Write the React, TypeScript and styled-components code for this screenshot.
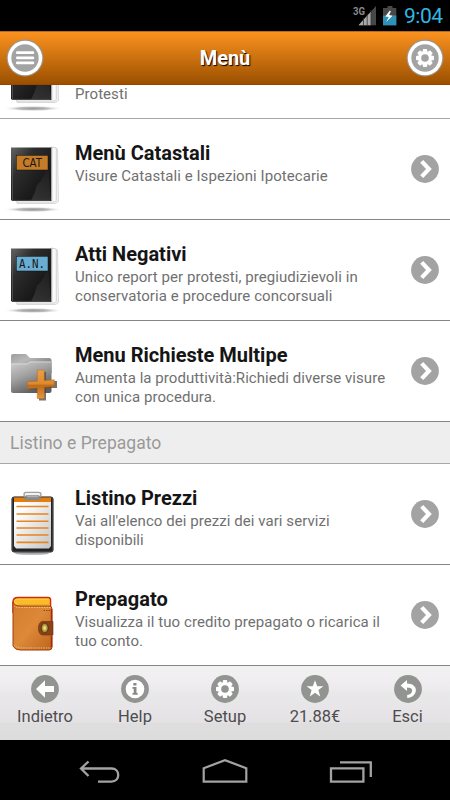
import React from 'react';
import styled, {createGlobalStyle} from "styled-components";

export default function App() {
    return (
        <Screen>
            <GlobalStyle/>
            <StatusBar>
                <StatusIcons/>
                <Clock>9:04</Clock>
            </StatusBar>
            <Header>
                <MenuIcon/>
                <HeaderTitle>Menù</HeaderTitle>
                <SettingsIcon/>
            </Header>
            <List>
                <ClippedRow>
                    <svg width="66" height="33" viewBox="0 67 66 33"><Book id="protesti"/></svg>
                    <Description>Protesti</Description>
                </ClippedRow>
                <MenuItem icon={<Book id="cat" label="CAT" color="#c57c28"/>} title="Menù Catastali"
                          lines={['Visure Catastali e Ispezioni Ipotecarie']}/>
                <MenuItem icon={<Book id="an" label="A.N." color="#6aadd3"/>} title="Atti Negativi"
                          lines={['Unico report per protesti, pregiudizievoli in', 'conservatoria e procedure concorsuali']}/>
                <MenuItem icon={<Folder/>} title="Menu Richieste Multipe"
                          lines={['Aumenta la produttività:Richiedi diverse visure', 'con unica procedura.']}/>
                <Section>Listino e Prepagato</Section>
                <MenuItem icon={<Clipboard/>} title="Listino Prezzi"
                          lines={["Vai all'elenco dei prezzi dei vari servizi", 'disponibili']}/>
                <MenuItem icon={<Wallet/>} title="Prepagato" last
                          lines={['Visualizza il tuo credito prepagato o ricarica il', 'tuo conto.']}/>
            </List>
            <Toolbar>
                <Tab>
                    <TabIcon><path d="M5 14 14 5.3V11h9v6h-9v5.7z" fill="#fff"/></TabIcon>
                    <span>Indietro</span>
                </Tab>
                <Tab>
                    <TabIcon>
                        <circle cx="14" cy="14" r="9.3" fill="#fff"/>
                        <path d="M12.3 8h3.2v2.4h-3.2zM11.5 12h4v6h1.2v1.7h-5.2V18h1.2v-4.3h-1.2z" fill="#898a88"/>
                    </TabIcon>
                    <span>Help</span>
                </Tab>
                <Tab>
                    <TabIcon><Gear hole="#929491"/></TabIcon>
                    <span>Setup</span>
                </Tab>
                <Tab>
                    <TabIcon>
                        <path d="m14 5.2 2.2 6h6.2l-5 3.9 1.8 6.3-5.2-3.7-5.2 3.7 1.8-6.3-5-3.9h6.2z" fill="#fff"/>
                    </TabIcon>
                    <span>21.88€</span>
                </Tab>
                <Tab $shift={5}>
                    <TabIcon>
                        <path d="M6.5 10.5 13 5v3.4c5.500 0 8.900 2.900 8.900 6.600 0 4.300-3.600 7.600-8.700 8v-3.100c3.100-.3 5-2.300 5-4.500s-1.900-3-5.200-3v3.600z" fill="#fff"/>
                    </TabIcon>
                    <span>Esci</span>
                </Tab>
            </Toolbar>
            <NavBar>
                <svg width="46" height="28" viewBox="0 0 46 28" fill="none" stroke="#a3a3a3" strokeWidth="2.300">
                    <path d="M12.500 4.500 5 11.500 12.500 19M5 11.500H35.500C44.500 11.500 44.500 24.600 35.500 24.600H22"/>
                </svg>
                <svg width="48" height="28" viewBox="0 0 48 28" fill="none" stroke="#a3a3a3" strokeWidth="2.200">
                    <path d="M2.700 24.700V11.200L24 3.200l21.300 8v13.500z"/>
                </svg>
                <svg width="46" height="28" viewBox="0 0 46 28" fill="none" stroke="#a3a3a3" strokeWidth="2.300">
                    <path d="M3 11.300h32.400v13.300H3zM12 5.400h30.800V20"/>
                </svg>
            </NavBar>
        </Screen>
    );
}

type MenuItemProps = {
    icon: React.ReactNode
    title: string
    lines: string[]
    last?: boolean
}

const MenuItem = ({icon, title, lines, last}: MenuItemProps) => {
    return (
        <Row $last={last}>
            <svg width="66" height="100" viewBox="0 0 66 100">{icon}</svg>
            <RowText>
                <Title>{title}</Title>
                {lines.map(line => <Description key={line}>{line}</Description>)}
            </RowText>
            <svg width="28" height="28" viewBox="0 0 28 28">
                <circle cx="14" cy="14" r="13.900" fill="#a3a3a3"/>
                <path d="m10.700 6.400 7.200 7.600-7.200 7.600" fill="none" stroke="#fff" strokeWidth="4.200"/>
            </svg>
        </Row>
    );
};

const TabIcon = ({children}: { children: React.ReactNode }) => (
    <svg width="28" height="28" viewBox="0 0 28 28">
        <circle cx="14" cy="14" r="13.900" fill="#929491"/>
        {children}
    </svg>
);

const Gear = ({hole}: { hole: string }) => (
    <g>
        {[0, 45, 90, 135].map(angle => (
            <rect key={angle} x="11.800" y="5" width="4.400" height="18" rx="1" fill="#fff"
                  transform={`rotate(${angle} 14 14)`}/>
        ))}
        <circle cx="14" cy="14" r="7" fill="#fff"/>
        <circle cx="14" cy="14" r="3.800" fill={hole}/>
    </g>
);

const MenuIcon = () => (
    <svg width="38" height="38" viewBox="0 0 38 38">
        <circle cx="19" cy="19" r="18.400" fill="#9a9392"/>
        <circle cx="19" cy="19" r="17.300" fill="#fff"/>
        <circle cx="19" cy="19" r="13.700" fill="#a3a3a3"/>
        <path d="M11.300 13.700h15.600M11.300 18.800h15.600M11.300 23.900h15.600" stroke="#fff" strokeWidth="2.800"
              strokeLinecap="round"/>
    </svg>
);

const SettingsIcon = () => (
    <svg width="38" height="38" viewBox="0 0 38 38">
        <circle cx="19" cy="19" r="18.400" fill="#9a9392"/>
        <circle cx="19" cy="19" r="17.300" fill="#fff"/>
        <circle cx="19" cy="19" r="13.700" fill="#a3a3a3"/>
        <g transform="translate(5 5)"><Gear hole="#a3a3a3"/></g>
    </svg>
);

const StatusIcons = () => (
    <svg width="46" height="24" viewBox="0 0 46 24">
        <text x="2" y="11" fontSize="10.500" fontWeight="700" fill="#8b8b8b" textLength="12"
              lengthAdjust="spacingAndGlyphs">3G</text>
        <path d="M7.500 21.200 25 2v19.200z" fill="#484848"/>
        <path d="M7.500 21.200 20 7.600v13.600z" fill="#aaa"/>
        <path d="M12.500 14v8M16.200 10v12M20 6v16" stroke="#333" strokeWidth=".8"/>
        <path d="M36.500 2h5v2h3.800v17.300H32V4h4.500z" fill="#484848"/>
        <path d="M32 11.500h13.300v9.800H32z" fill="#2e91b8"/>
        <path d="m38.800 6.500-4.500 6 3.500.6-2.700 4.900 6.500-6.200-3.500-.9 1.800-3.400z" fill="#fff"/>
    </svg>
);

const Book = ({id, label, color}: { id: string, label?: string, color?: string }) => (
    <g>
        <defs>
            <linearGradient id={`${id}-cover`} x1="0" y1="0" x2="1" y2="1">
                <stop offset="0" stopColor="#666"/>
                <stop offset=".3" stopColor="#2d2d2d"/>
                <stop offset=".65" stopColor="#1b1b1b"/>
                <stop offset="1" stopColor="#101010"/>
            </linearGradient>
            <linearGradient id={`${id}-shine`} x1="0" y1="0" x2="0" y2="1">
                <stop offset="0" stopColor="#fff" stopOpacity="0"/>
                <stop offset="1" stopColor="#fff" stopOpacity=".12"/>
            </linearGradient>
            <radialGradient id={`${id}-shadow`}>
                <stop offset="0" stopColor="#999"/>
                <stop offset=".5" stopColor="#bbb"/>
                <stop offset="1" stopColor="#fff" stopOpacity="0"/>
            </radialGradient>
        </defs>
        <ellipse cx="33" cy="90.500" rx="30" ry="2.800" fill={`url(#${id}-shadow)`}/>
        <path d="M17 84.500h38.500l3-2-1-52.500-6-1.700z" fill="#f3f3f3" stroke="#d0d0d0" strokeWidth=".8"/>
        <path d="M16 83h38.800l1.500-1.500V29l-5-1z" fill="#fafafa" stroke="#c9c9c9" strokeWidth=".8"/>
        <path d="M11 28.500h40.500V82h-39L11 80.500z" fill={`url(#${id}-cover)`}/>
        <path d="M37 66q8-7 11-21l3 36.500H31q4-7 6-15.500z" fill={`url(#${id}-shine)`}/>
        <path d="M12.500 29v52M11.500 81.400h39" stroke="#555" strokeWidth=".8"/>
        <path d="M51.800 28.500v53" stroke="#b5b5b5"/>
        {label && (
            <>
                <rect x="16.300" y="36.300" width="31.700" height="14.700" fill={color} stroke="#111" strokeWidth=".5"/>
                <text x={label === 'CAT' ? 22.5 : 19} y="47.800"
                      fontFamily={label === 'CAT' ? 'DejaVu Sans, sans-serif' : 'DejaVu Sans Mono, monospace'}
                      fontSize="12.500"
                      fill="#171717" textLength={label === 'CAT' ? 19.500 : 26}
                      lengthAdjust="spacingAndGlyphs">{label}</text>
            </>
        )}
    </g>
);

const Folder = () => (
    <g>
        <defs>
            <linearGradient id="folder" x1="0" y1="0" x2="1" y2=".9">
                <stop stopColor="#9d9d9d"/>
                <stop offset=".35" stopColor="#b9b9b9"/>
                <stop offset="1" stopColor="#666"/>
            </linearGradient>
            <linearGradient id="folder-front" x1="0" y1="0" x2=".5" y2="1">
                <stop stopColor="#d0d0d0"/>
                <stop offset=".5" stopColor="#a0a0a0"/>
                <stop offset="1" stopColor="#5d5d5d"/>
            </linearGradient>
            <linearGradient id="plus" x1="0" y1="0" x2="0" y2="1">
                <stop stopColor="#eaa04b"/>
                <stop offset=".48" stopColor="#df8a2c"/>
                <stop offset=".55" stopColor="#bd6b1b"/>
                <stop offset="1" stopColor="#e99738"/>
            </linearGradient>
        </defs>
        <path d="M11 35q0-2 2-2h13l4 4h19q2.500 0 2.500 2.500V52H11z" fill="url(#folder)"/>
        <path d="M11 42.500h15.500l3.500-2h21.500V70q0 2-2 2H13q-2 0-2-2z" fill="url(#folder-front)"/>
        <path d="M11.500 43H27l3-2h21" fill="none" stroke="#ddd" strokeWidth=".8"/>
        <path d="M39 51h7v9h11v7H46v12.500h-7V68.500H28.500v-7H39z" fill="#444" opacity=".75"/>
        <path d="M37.300 49h7v10.500l10-.7v6.800l-10 .6v11.300h-7V67l-9.800.7v-7l9.800-.5z" fill="url(#plus)" stroke="#ba6815" strokeWidth=".5"/>
    </g>
);

const Clipboard = () => (
    <g>
        <defs>
            <linearGradient id="paper" x1="0" y1="0" x2="1" y2="1">
                <stop offset=".2" stopColor="#fff"/>
                <stop offset="1" stopColor="#c4c4c4"/>
            </linearGradient>
        </defs>
        <ellipse cx="32" cy="89.500" rx="17" ry="1.300" fill="#aaa"/>
        <rect x="11.500" y="32.500" width="42" height="56" rx="3" fill="#202426"/>
        <rect x="12.300" y="33.300" width="40.400" height="54.400" rx="2" fill="none" stroke="#555" strokeWidth=".7"/>
        <path d="M14 35h37v47l-2 2.500H16L14 82z" fill="url(#paper)"/>
        <path d="M14 33.500h37v4.500H14z" fill="#e97d0b"/>
        <path d="M16.500 42.500h32M16.500 50h32M16.500 57.300h32M16.500 64h32M16.500 71h32M16.500 78.400h32" stroke="#e9851d" strokeWidth="1.600"/>
        <rect x="24" y="28.300" width="17" height="4.500" rx="2.200" fill="#f2f2f2" stroke="#a0a0a0" strokeWidth="1.300"/>
        <path d="M26 31.300h13l2 5H24z" fill="#898989"/>
        <path d="M27 32.700h11" stroke="#bbb"/>
    </g>
);

const Wallet = () => (
    <g>
        <defs>
            <linearGradient id="wallet" x1="0" y1="0" x2="1" y2="1">
                <stop stopColor="#d57a30"/>
                <stop offset=".5" stopColor="#dc8938"/>
                <stop offset="1" stopColor="#bd641e"/>
            </linearGradient>
            <radialGradient id="clasp">
                <stop stopColor="#fff5ac"/>
                <stop offset=".5" stopColor="#c9ad44"/>
                <stop offset="1" stopColor="#7a6428"/>
            </radialGradient>
        </defs>
        <path d="M13 37q0-4.500 5-4.500h30q3 0 2.500 4V47H13z" fill="#ffca37" stroke="#d02c0b" strokeWidth="1.500"/>
        <path d="M15 36h34M17 38h32M19 39.500h30" stroke="#f1a618" strokeWidth=".8"/>
        <path d="M13 37q1 4 8 4h28q3 0 3 3v38q0 3-3 3H20q-5 0-7-4z" fill="url(#wallet)" stroke="#a23c0a"/>
        <path d="M14 41q2 1.500 6 1.500h31M14 80q3 3 7 3h29" fill="none" stroke="#e9c08a" strokeDasharray="1.500 1"/>
        <path d="M51.500 44v13M51.500 71v11" stroke="#a52c0b" strokeWidth="1.500"/>
        <path d="M43.500 45.500H45m1 0h1.500m1 0H50" stroke="#914610"/>
        <path d="M42 56.500h11V70H42q-3.500-1-3.500-6.700t3.500-6.800z" fill="#8b4216" stroke="#71300b" strokeWidth=".6"/>
        <ellipse cx="44.700" cy="63" rx="3.600" ry="5" fill="url(#clasp)" stroke="#49280d" strokeWidth=".7"/>
    </g>
);

const GlobalStyle = createGlobalStyle`
  * {
    box-sizing: border-box;
  }

  body {
    margin: 0;
    font-family: Roboto, sans-serif;
  }

  svg {
    display: block;
    flex-shrink: 0;
  }
`

const Screen = styled.div`
  display: flex;
  flex-direction: column;
  width: 450px;
  height: 800px;
  overflow: hidden;
  background-color: white;
`

const StatusBar = styled.div`
  display: flex;
  align-items: flex-end;
  justify-content: flex-end;
  gap: 7px;
  height: 31px;
  padding: 0 7px 3px 0;
  background-color: black;
`

const Clock = styled.span`
  width: 39px;
  white-space: nowrap;
  font-size: 21px;
  line-height: 24px;
  letter-spacing: -0.5px;
  color: #33b5e5;
`

const Header = styled.header`
  display: flex;
  align-items: center;
  justify-content: space-between;
  height: 54px;
  padding: 0 6px;
  border-top: 1px solid #b66a1e;
  border-bottom: 1px solid #a14300;
  background: linear-gradient(#fb921f, #9b5000);
`

const HeaderTitle = styled.h1`
  margin: 0;
  font-size: 20px;
  font-weight: 700;
  letter-spacing: -0.1px;
  color: white;
  text-shadow: 1px 1px 1px black;
`

const List = styled.main`
  height: 580px;
`

const Row = styled.div<{ $last?: boolean }>`
  display: flex;
  align-items: center;
  height: ${({$last}) => $last ? '100px' : '101px'};
  padding-right: 11px;
  border-bottom: ${({$last}) => $last ? 'none' : '1px solid #858585'};
`

const ClippedRow = styled.div`
  display: flex;
  height: 34px;
  border-bottom: 1px solid #a6a6a6;

  p {
    margin-left: 9px;
  }
`

const RowText = styled.div`
  flex: 1;
  align-self: flex-start;
  padding: 21px 0 0 9px;
`

const Title = styled.h2`
  margin: 0 0 1px;
  font-size: 20px;
  font-weight: 700;
  line-height: 26px;
  color: #151515;
  white-space: nowrap;
`

const Description = styled.p`
  margin: 0;
  font-size: 15px;
  line-height: 18.600px;
  letter-spacing: 0.06px;
  color: #707070;
  white-space: nowrap;
`

const Section = styled.div`
  height: 42px;
  padding-left: 10px;
  border-bottom: 1px solid #a8a8a8;
  background-color: #eee;
  font-size: 17.500px;
  line-height: 42px;
  letter-spacing: 0.04px;
  color: #999;
`

const Toolbar = styled.footer`
  display: grid;
  grid-template-columns: repeat(5, 90px);
  height: 75px;
  border-top: 1px solid #858585;
  background: linear-gradient(#f2f2f2, #f0edf0 22%, #e9e8e9 38%, #e5e2e6 75%, #dedede 78%, #dcdcdc);
`

const Tab = styled.div<{ $shift?: number }>`
  display: flex;
  flex-direction: column;
  align-items: center;
  gap: 4px;
  padding-top: 9px;
  padding-left: ${({$shift}) => $shift ?? 0}px;
  font-size: 16.500px;
  line-height: 20px;
  color: #4d4d4d;
`

const NavBar = styled.nav`
  display: flex;
  justify-content: center;
  gap: 79px;
  height: 60px;
  padding-top: 17px;
  background-color: black;
`
